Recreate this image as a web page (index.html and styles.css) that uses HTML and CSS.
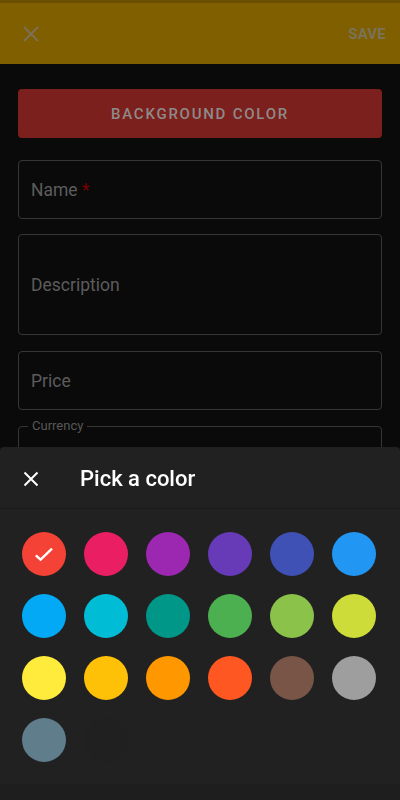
FILE: index.html
```html
<!DOCTYPE html>
<html lang="en">
<head>
<meta charset="utf-8">
<title>Pick a color</title>
<link rel="stylesheet" href="styles.css">
</head>
<body>
<div class="app">
  <header class="appbar">
    <svg class="appbar-close" width="18" height="18" viewBox="0 0 18 18"><path d="M2 2L16 16M16 2L2 16" stroke="currentColor" stroke-width="2" fill="none"/></svg>
    <span class="save">SAVE</span>
  </header>
  <main class="form">
    <div class="bg-button">BACKGROUND COLOR</div>
    <div class="field field-name"><span class="ph">Name <span class="req">*</span></span></div>
    <div class="field field-desc"><span class="ph">Description</span></div>
    <div class="field field-price"><span class="ph">Price</span></div>
    <fieldset class="field-currency"><legend>Currency</legend></fieldset>
  </main>
</div>

<section class="sheet">
  <div class="sheet-head">
    <svg class="sheet-close" width="16" height="16" viewBox="0 0 16 16"><path d="M1.5 1.5L14.5 14.5M14.5 1.5L1.5 14.5" stroke="currentColor" stroke-width="2" fill="none"/></svg>
    <h2 class="sheet-title">Pick a color</h2>
  </div>
  <div class="swatches">
    <div class="sw sel" style="background:#f44336"><svg width="22" height="22" viewBox="0 0 22 22"><path d="M2.8 12.3L7.6 16.6L19 5.6" stroke="#fff" stroke-width="2.4" fill="none"/></svg></div>
    <div class="sw" style="background:#e91e63"></div>
    <div class="sw" style="background:#9c27b0"></div>
    <div class="sw" style="background:#673ab7"></div>
    <div class="sw" style="background:#3f51b5"></div>
    <div class="sw" style="background:#2196f3"></div>
    <div class="sw" style="background:#03a9f4"></div>
    <div class="sw" style="background:#00bcd4"></div>
    <div class="sw" style="background:#009688"></div>
    <div class="sw" style="background:#4caf50"></div>
    <div class="sw" style="background:#8bc34a"></div>
    <div class="sw" style="background:#cddc39"></div>
    <div class="sw" style="background:#ffeb3b"></div>
    <div class="sw" style="background:#ffc107"></div>
    <div class="sw" style="background:#ff9800"></div>
    <div class="sw" style="background:#ff5722"></div>
    <div class="sw" style="background:#795548"></div>
    <div class="sw" style="background:#9e9e9e"></div>
    <div class="sw" style="background:#607d8b"></div>
    <div class="sw sw-dark"></div>
  </div>
  <div class="navstrip"></div>
</section>
</body>
</html>
```

FILE: styles.css
```css
* { box-sizing: border-box; }
html, body { margin: 0; padding: 0; }
body {
  width: 400px;
  height: 800px;
  overflow: hidden;
  background: #0a0a0a;
  font-family: Roboto, "Liberation Sans", sans-serif;
}
.app { display: flex; flex-direction: column; }
.appbar {
  height: 64px;
  background: #7f5f00;
  border-top: 3px solid #6a4f00;
  display: flex;
  align-items: center;
  justify-content: space-between;
  padding: 0 14px 0 22px;
}
.appbar-close { color: #7c7156; }
.save {
  color: #7b7257;
  font-size: 15px;
  font-weight: 700;
  letter-spacing: 0.2px;
  margin-top: 1px;
}
.form {
  padding: 25px 18px 0;
  display: flex;
  flex-direction: column;
}
.bg-button {
  height: 49px;
  background: #7b201c;
  border-radius: 4px;
  display: flex;
  align-items: center;
  justify-content: center;
  color: #8f8a8a;
  font-size: 15px;
  font-weight: 500;
  letter-spacing: 1.75px;
  margin-bottom: 22px;
}
.field {
  border: 1px solid #363636;
  border-radius: 4px;
  display: flex;
  align-items: center;
  padding-left: 12px;
  margin-bottom: 15px;
}
.field-name { height: 59px; }
.field-desc { height: 101px; margin-bottom: 16px; }
.field-price { height: 59px; }
.ph { color: #5c5c5c; font-size: 17.5px; }
.req { color: #7a0000; }
.field-currency {
  margin: -6px 0 0;
  padding: 0 9px;
  border: 1px solid #363636;
  border-radius: 4px;
  height: 80px;
}
.field-currency legend {
  color: #585858;
  font-size: 13px;
  padding: 0 4px;
  line-height: 14px;
}

.sheet {
  position: fixed;
  left: 0;
  right: 0;
  top: 447px;
  bottom: 0;
  background: #212121;
  border-radius: 4px 4px 0 0;
  display: flex;
  flex-direction: column;
}
.sheet-head {
  height: 62px;
  border-bottom: 1px solid #1b1b1b;
  display: flex;
  align-items: center;
  padding-left: 23px;
  flex-shrink: 0;
}
.sheet-close { color: #fff; margin-top: 2px; }
.sheet-title {
  margin: 2px 0 0 41px;
  color: #fff;
  font-size: 22px;
  font-weight: 500;
}
.swatches {
  display: grid;
  grid-template-columns: repeat(6, 44px);
  grid-auto-rows: 44px;
  gap: 18px;
  padding: 23px 22px 0;
  flex: 1;
}
.sw {
  width: 44px;
  height: 44px;
  border-radius: 50%;
  display: flex;
  align-items: center;
  justify-content: center;
}
.sw-dark { background: #202020; }
.navstrip {
  height: 16px;
  background: #1e1e1e;
  flex-shrink: 0;
}
```
